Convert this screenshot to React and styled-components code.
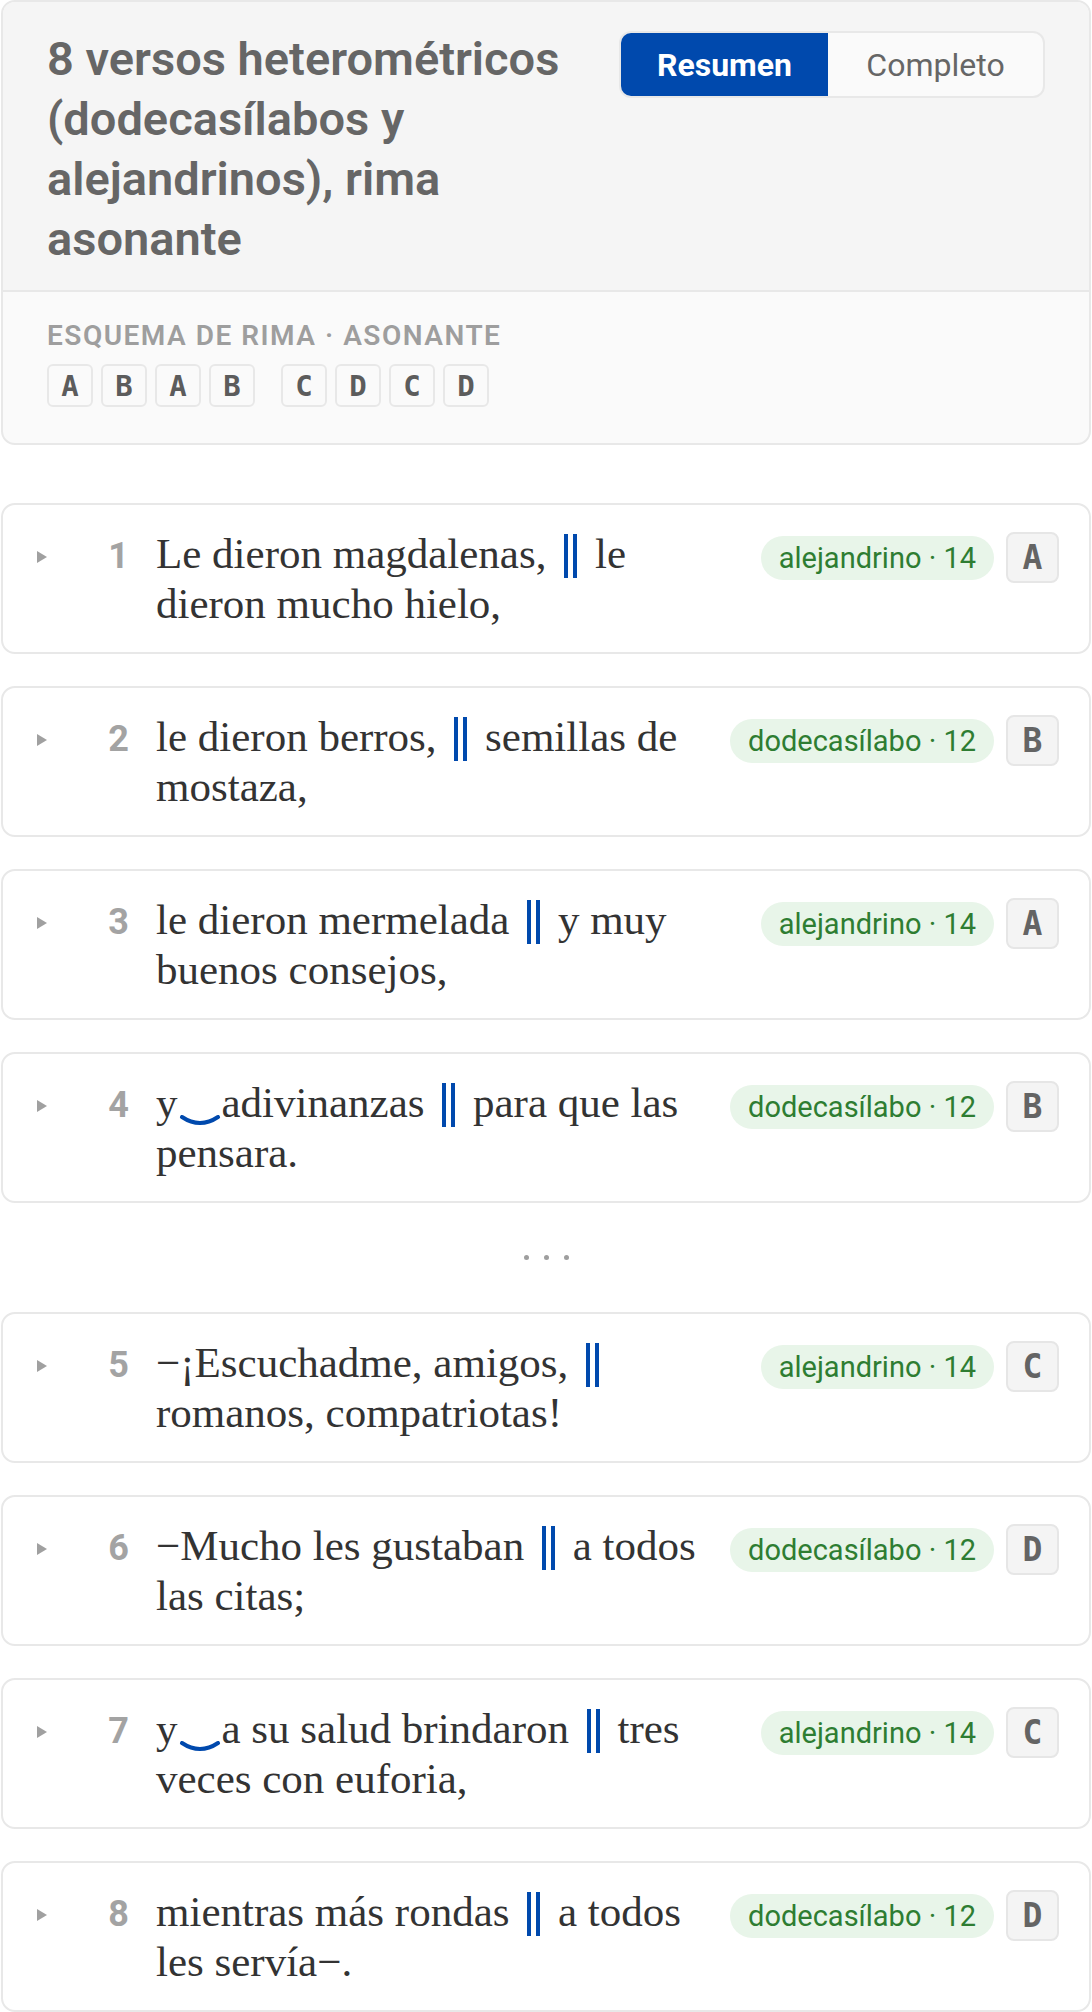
import React from 'react';
import styled, { createGlobalStyle } from 'styled-components';

const GlobalStyle = createGlobalStyle`
  html, body {
    margin: 0;
    padding: 0;
    background: #fff;
  }
  body {
    font-family: Roboto, "Noto Sans", sans-serif;
    -webkit-font-smoothing: antialiased;
  }
`;

const BLUE = '#0049ad';

const Page = styled.div`
  width: 1092px;
  box-sizing: border-box;
  padding: 0 1px 4px;
  display: flex;
  flex-direction: column;
`;

const Summary = styled.section`
  border: 2px solid #e8e8e8;
  border-radius: 14px;
  overflow: hidden;
  background: #fafafa;
  margin-bottom: 58px;
`;

const SummaryTop = styled.div`
  display: flex;
  align-items: flex-start;
  gap: 40px;
  padding: 27px 44px 21px 44px;
  background: #f5f5f5;
  border-bottom: 2px solid #e8e8e8;
`;

const Title = styled.h1`
  flex: 1;
  margin: 0;
  font-family: Roboto, "Noto Sans", sans-serif;
  font-weight: 600;
  font-size: 47px;
  line-height: 60px;
  color: #666;
`;

const Toggle = styled.div`
  display: flex;
  flex-shrink: 0;
  margin-top: 2px;
  border: 2px solid #e8e8e8;
  border-radius: 12px;
  overflow: hidden;
  background: #fafafa;
`;

const ToggleOption = styled.button`
  width: ${p => p.$w}px;
  height: 63px;
  margin: 0;
  padding: 0;
  border: none;
  font-family: Roboto, "Noto Sans", sans-serif;
  font-size: 32px;
  font-weight: ${p => (p.$active ? 700 : 400)};
  color: ${p => (p.$active ? '#fff' : '#666')};
  background: ${p => (p.$active ? BLUE : 'transparent')};
  cursor: pointer;
`;

const SummaryBottom = styled.div`
  padding: 27px 44px 36px;
`;

const SchemeLabel = styled.div`
  font-size: 28px;
  line-height: 34px;
  font-weight: 600;
  letter-spacing: 1.5px;
  color: #9e9e9e;
`;

const SchemeRow = styled.div`
  display: flex;
  gap: 26px;
  margin-top: 11px;
`;

const SchemeGroup = styled.div`
  display: flex;
  gap: 8px;
`;

const SchemeLetter = styled.span`
  width: 46px;
  height: 43px;
  box-sizing: border-box;
  display: flex;
  align-items: center;
  justify-content: center;
  border: 2px solid #e8e8e8;
  border-radius: 6px;
  font-family: "DejaVu Sans Mono", "Liberation Mono", monospace;
  font-weight: 700;
  font-size: 29px;
  color: #5c5c5c;
`;

const VerseList = styled.div`
  display: flex;
  flex-direction: column;
  gap: 32px;
`;

const VerseCard = styled.article`
  display: flex;
  align-items: flex-start;
  padding: 24px 30px 23px 34px;
  border: 2px solid #e8e8e8;
  border-radius: 14px;
  background: #fff;
`;

const Caret = styled.span`
  flex-shrink: 0;
  width: 0;
  height: 0;
  margin-top: 22px;
  border-left: 10px solid #a0a0a0;
  border-top: 6px solid transparent;
  border-bottom: 6px solid transparent;
`;

const Num = styled.span`
  flex-shrink: 0;
  width: 82px;
  margin-top: 2px;
  text-align: right;
  font-family: Roboto, "Noto Sans", sans-serif;
  font-weight: 700;
  font-size: 36px;
  line-height: 50px;
  color: #a3a3a3;
`;

const VerseText = styled.p`
  flex: 1;
  margin: 0 0 0 27px;
  font-family: "Liberation Serif", "Times New Roman", serif;
  font-size: 43px;
  line-height: 50px;
  color: #333;
`;

const Caesura = styled.span`
  display: inline-block;
  width: 5px;
  height: 44px;
  margin: 0 7px;
  vertical-align: -10px;
  border-left: 4px solid ${BLUE};
  border-right: 4px solid ${BLUE};
`;

const Tie = styled.svg`
  display: inline-block;
  width: 42px;
  height: 12px;
  margin: 0 1px;
  vertical-align: -10px;
`;

const Meta = styled.div`
  flex-shrink: 0;
  display: flex;
  align-items: center;
  gap: 12px;
  margin: 3px 0 0 32px;
`;

const MeterPill = styled.span`
  height: 44px;
  padding: 0 18px;
  border-radius: 22px;
  background: #e8f5e9;
  color: #2e7d32;
  font-size: 29px;
  line-height: 44px;
  white-space: nowrap;
`;

const RhymeBox = styled.span`
  width: 53px;
  height: 51px;
  box-sizing: border-box;
  display: flex;
  align-items: center;
  justify-content: center;
  background: #f4f4f4;
  border: 2px solid #e6e6e6;
  border-radius: 8px;
  font-family: "DejaVu Sans Mono", "Liberation Mono", monospace;
  font-weight: 700;
  font-size: 33px;
  color: #646464;
`;

const Gap = styled.div`
  height: 45px;
  display: flex;
  align-items: center;
  justify-content: center;
  gap: 15px;
`;

const Dot = styled.span`
  width: 5px;
  height: 5px;
  border-radius: 50%;
  background: #9e9e9e;
`;

const TieMark = () => (
  <Tie viewBox="0 0 42 12" aria-label="sinalefa">
    <path d="M3 2 Q21 14 39 2" fill="none" stroke={BLUE} strokeWidth="4" strokeLinecap="round" />
  </Tie>
);

// "_" in a hemistich marks a synalepha, the caesura goes between a and b
const renderHalf = text =>
  text.split('_').map((part, i) => (
    <React.Fragment key={i}>
      {i > 0 && <TieMark />}
      {part}
    </React.Fragment>
  ));

const verses = [
  { n: 1, a: 'Le dieron magdalenas,', b: 'le dieron mucho hielo,', meter: 'alejandrino · 14', rhyme: 'A' },
  { n: 2, a: 'le dieron berros,', b: 'semillas de mostaza,', meter: 'dodecasílabo · 12', rhyme: 'B' },
  { n: 3, a: 'le dieron mermelada', b: 'y muy buenos consejos,', meter: 'alejandrino · 14', rhyme: 'A' },
  { n: 4, a: 'y_adivinanzas', b: 'para que las pensara.', meter: 'dodecasílabo · 12', rhyme: 'B', breakAfter: true },
  { n: 5, a: '−¡Escuchadme, amigos,', b: 'romanos, compatriotas!', meter: 'alejandrino · 14', rhyme: 'C' },
  { n: 6, a: '−Mucho les gustaban', b: 'a todos las citas;', meter: 'dodecasílabo · 12', rhyme: 'D' },
  { n: 7, a: 'y_a su salud brindaron', b: 'tres veces con euforia,', meter: 'alejandrino · 14', rhyme: 'C' },
  { n: 8, a: 'mientras más rondas', b: 'a todos les servía−.', meter: 'dodecasílabo · 12', rhyme: 'D' },
];

const scheme = [['A', 'B', 'A', 'B'], ['C', 'D', 'C', 'D']];

const Verse = ({ v }) => (
  <VerseCard>
    <Caret />
    <Num>{v.n}</Num>
    <VerseText>
      {renderHalf(v.a)} <Caesura aria-label="‖" /> {renderHalf(v.b)}
    </VerseText>
    <Meta>
      <MeterPill>{v.meter}</MeterPill>
      <RhymeBox>{v.rhyme}</RhymeBox>
    </Meta>
  </VerseCard>
);

export default function App() {
  return (
    <Page>
      <GlobalStyle />
      <Summary>
        <SummaryTop>
          <Title>8 versos heterométricos (dodecasílabos y alejandrinos), rima asonante</Title>
          <Toggle>
            <ToggleOption $active $w={207}>Resumen</ToggleOption>
            <ToggleOption $w={215}>Completo</ToggleOption>
          </Toggle>
        </SummaryTop>
        <SummaryBottom>
          <SchemeLabel>ESQUEMA DE RIMA · ASONANTE</SchemeLabel>
          <SchemeRow>
            {scheme.map((group, gi) => (
              <SchemeGroup key={gi}>
                {group.map((l, i) => (
                  <SchemeLetter key={i}>{l}</SchemeLetter>
                ))}
              </SchemeGroup>
            ))}
          </SchemeRow>
        </SummaryBottom>
      </Summary>

      <VerseList>
        {verses.map(v => (
          <React.Fragment key={v.n}>
            <Verse v={v} />
            {v.breakAfter && (
              <Gap>
                <Dot />
                <Dot />
                <Dot />
              </Gap>
            )}
          </React.Fragment>
        ))}
      </VerseList>
    </Page>
  );
}
